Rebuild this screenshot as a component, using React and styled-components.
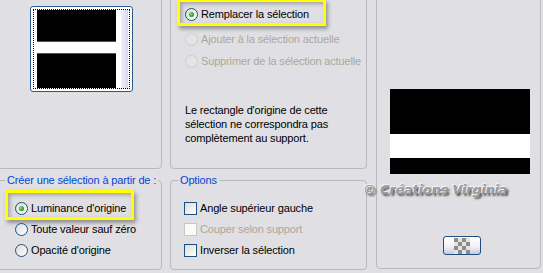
import React from "react";
import styled, { createGlobalStyle } from "styled-components";

const Global = createGlobalStyle`
  html, body { margin: 0; padding: 0; background: #E0DFE3; }
  body { font-family: "Liberation Sans", Arial, sans-serif; font-size: 11px; letter-spacing: -0.15px; color: #000; }
`;

const Screen = styled.div`
  position: relative;
  width: 543px;
  height: 273px;
  overflow: hidden;
  background: #E0DFE3;
`;

const Row = styled.div`
  display: flex;
  gap: 8px;
  margin: -8px 0 0 -3px;
`;

const Column = styled.div`
  display: flex;
  flex-direction: column;
  width: ${(p) => p.$w}px;
  margin-left: ${(p) => p.$ml || 0}px;
  flex: none;
`;

const Group = styled.div`
  position: relative;
  box-sizing: border-box;
  height: ${(p) => p.$h}px;
  margin-top: ${(p) => p.$mt || 0}px;
  border: 1px solid #BAB8C0;
  border-radius: 4px;
  padding: ${(p) => p.$pad};
  display: flex;
  flex-direction: column;
  align-items: flex-start;
`;

const Legend = styled.span`
  position: absolute;
  top: -7px;
  left: 7px;
  padding: 0 2px;
  line-height: 13px;
  background: #E0DFE3;
  color: #0046D5;
  white-space: nowrap;
`;

const Thumb = styled.div`
  box-sizing: border-box;
  width: 103px;
  height: 86px;
  border: 1px solid #2A5A8C;
  border-radius: 3px;
  background: #fff;
  padding: 2px;
`;

const Focus = styled.div`
  box-sizing: border-box;
  height: 100%;
  border: 1px dotted #000;
  display: flex;
  padding-left: 3px;
`;

const Stripes = styled.div`
  display: flex;
  flex-direction: column;
  width: ${(p) => p.$w}px;
`;

const Stripe = styled.div`
  height: ${(p) => p.$h}px;
  background: ${(p) => (p.$dark ? "#000" : "#fff")};
  box-shadow: ${(p) => (p.$edge ? "inset 0 1px 0 #555, inset 0 -1px 0 #555" : "none")};
`;

const ScrollStrip = styled.div`
  width: 7px;
  margin-left: 5px;
  background: linear-gradient(90deg, #F2F2FA, #D8D8EC);
`;

const List = styled.div`
  display: flex;
  flex-direction: column;
  gap: ${(p) => p.$gap}px;
`;

const OptionRow = styled.label`
  position: relative;
  display: flex;
  align-items: center;
  height: 16px;
  gap: 3px;
  white-space: nowrap;
  color: ${(p) => (p.$disabled ? "#ACA899" : "#000")};
  margin-bottom: ${(p) => p.$mb || 0}px;
`;

const Radio = styled.span`
  box-sizing: border-box;
  width: 13px;
  height: 13px;
  border-radius: 50%;
  border: 1px solid ${(p) => (p.$disabled ? "#CFCDC4" : "#1C5180")};
  background: ${(p) =>
    p.$disabled ? "#E4E3E7" : "linear-gradient(135deg, #DCDCD7, #FFFFFF)"};
  display: flex;
  align-items: center;
  justify-content: center;
  flex: none;
  &::after {
    content: "";
    display: ${(p) => (p.$checked ? "block" : "none")};
    width: 5px;
    height: 5px;
    border-radius: 50%;
    background: radial-gradient(circle at 40% 40%, #8EE08E, #21A121 60%, #1A8A1A);
  }
`;

const Check = styled.span`
  box-sizing: border-box;
  width: 13px;
  height: 13px;
  border: 1px solid ${(p) => (p.$disabled ? "#CAC8BB" : "#1C5180")};
  background: ${(p) =>
    p.$disabled ? "#FAFAFA" : "linear-gradient(135deg, #DCDCD7, #FFFFFF)"};
  flex: none;
`;

const Highlight = styled.span`
  position: absolute;
  left: ${(p) => p.$x}px;
  top: ${(p) => p.$y}px;
  width: ${(p) => p.$w}px;
  height: ${(p) => p.$h}px;
  box-sizing: border-box;
  border: 3px solid #FFFF00;
  box-shadow: 2px 3px 4px rgba(0, 0, 0, 0.35), inset 2px 2px 4px rgba(0, 0, 0, 0.28);
  pointer-events: none;
`;

const Note = styled.p`
  margin: ${(p) => p.$mt}px 0 0 0;
  line-height: 14px;
`;

const Preview = styled.div`
  display: flex;
  flex-direction: column;
  width: 140px;
`;

const SmallButton = styled.button`
  box-sizing: border-box;
  width: 38px;
  height: 19px;
  margin: ${(p) => p.$m};
  padding: 0;
  border: 1px solid #1F4E82;
  border-radius: 3px;
  background: linear-gradient(180deg, #FFFFFF 0%, #F2F2F6 55%, #C9C9DC 100%);
  display: flex;
  align-items: center;
  justify-content: center;
`;

const Watermark = styled.div`
  position: absolute;
  left: 363px;
  top: 182px;
  font-family: "DejaVu Sans", sans-serif;
  font-weight: bold;
  font-style: italic;
  font-size: 13px;
  letter-spacing: -0.25px;
  color: #9C9C9C;
  text-shadow: -1px -1px 0 #F4F4F4, 2px 2px 2px #555;
  white-space: nowrap;
`;

function Checker() {
  const cells = [];
  for (let r = 0; r < 4; r++) {
    for (let c = 0; c < 4; c++) {
      cells.push(
        <rect key={`${r}-${c}`} x={c * 4} y={r * 4} width="4" height="4" fill={(r + c) % 2 ? "#E4E4E4" : "#8C8C8C"} />
      );
    }
  }
  return (
    <svg width="16" height="16" viewBox="0 0 16 16">
      {cells}
    </svg>
  );
}

export default function App() {
  return (
    <Screen>
      <Global />
      <Row>
        <Column $w={165}>
          <Group $h={177} $pad="13px 0 0 32px">
            <Thumb>
              <Focus>
                <Stripes $w={79}>
                  <Stripe $dark $h={31} />
                  <Stripe $edge $h={14} />
                  <Stripe $dark $h={34} />
                </Stripes>
                <ScrollStrip />
              </Focus>
            </Thumb>
          </Group>
          <Group $h={90} $mt={11} $pad="19px 0 0 17px">
            <Legend>Créer une sélection à partir de :</Legend>
            <List $gap={5}>
              <OptionRow>
                <Highlight $x={-10} $y={-10} $w={129} $h={30} />
                <Radio $checked />
                Luminance d'origine
              </OptionRow>
              <OptionRow>
                <Radio />
                Toute valeur sauf zéro
              </OptionRow>
              <OptionRow>
                <Radio />
                Opacité d'origine
              </OptionRow>
            </List>
          </Group>
        </Column>

        <Column $w={197}>
          <Group $h={177} $pad="13px 0 0 14px">
            <List $gap={6}>
              <OptionRow $mb={3}>
                <Highlight $x={-8} $y={-7} $w={149} $h={27} />
                <Radio $checked />
                Remplacer la sélection
              </OptionRow>
              <OptionRow $disabled>
                <Radio $disabled />
                Ajouter à la sélection actuelle
              </OptionRow>
              <OptionRow $disabled>
                <Radio $disabled />
                Supprimer de la sélection actuelle
              </OptionRow>
            </List>
            <Note $mt={34}>
              Le rectangle d'origine de cette
              <br />
              sélection ne correspondra pas
              <br />
              complètement au support.
            </Note>
          </Group>
          <Group $h={90} $mt={11} $pad="19px 0 0 13px">
            <Legend>Options</Legend>
            <List $gap={5}>
              <OptionRow>
                <Check />
                Angle supérieur gauche
              </OptionRow>
              <OptionRow $disabled>
                <Check $disabled />
                Couper selon support
              </OptionRow>
              <OptionRow>
                <Check />
                Inverser la sélection
              </OptionRow>
            </List>
          </Group>
        </Column>

        <Column $w={165} $ml={1}>
          <Group $h={277} $pad="96px 0 0 13px">
            <Preview>
              <Stripe $dark $h={45} />
              <Stripe $h={24} />
              <Stripe $dark $h={16} />
            </Preview>
            <SmallButton $m="62px 0 0 53px" aria-label="Transparence">
              <Checker />
            </SmallButton>
          </Group>
        </Column>
      </Row>
      <Watermark>© Créations Virginia</Watermark>
    </Screen>
  );
}
